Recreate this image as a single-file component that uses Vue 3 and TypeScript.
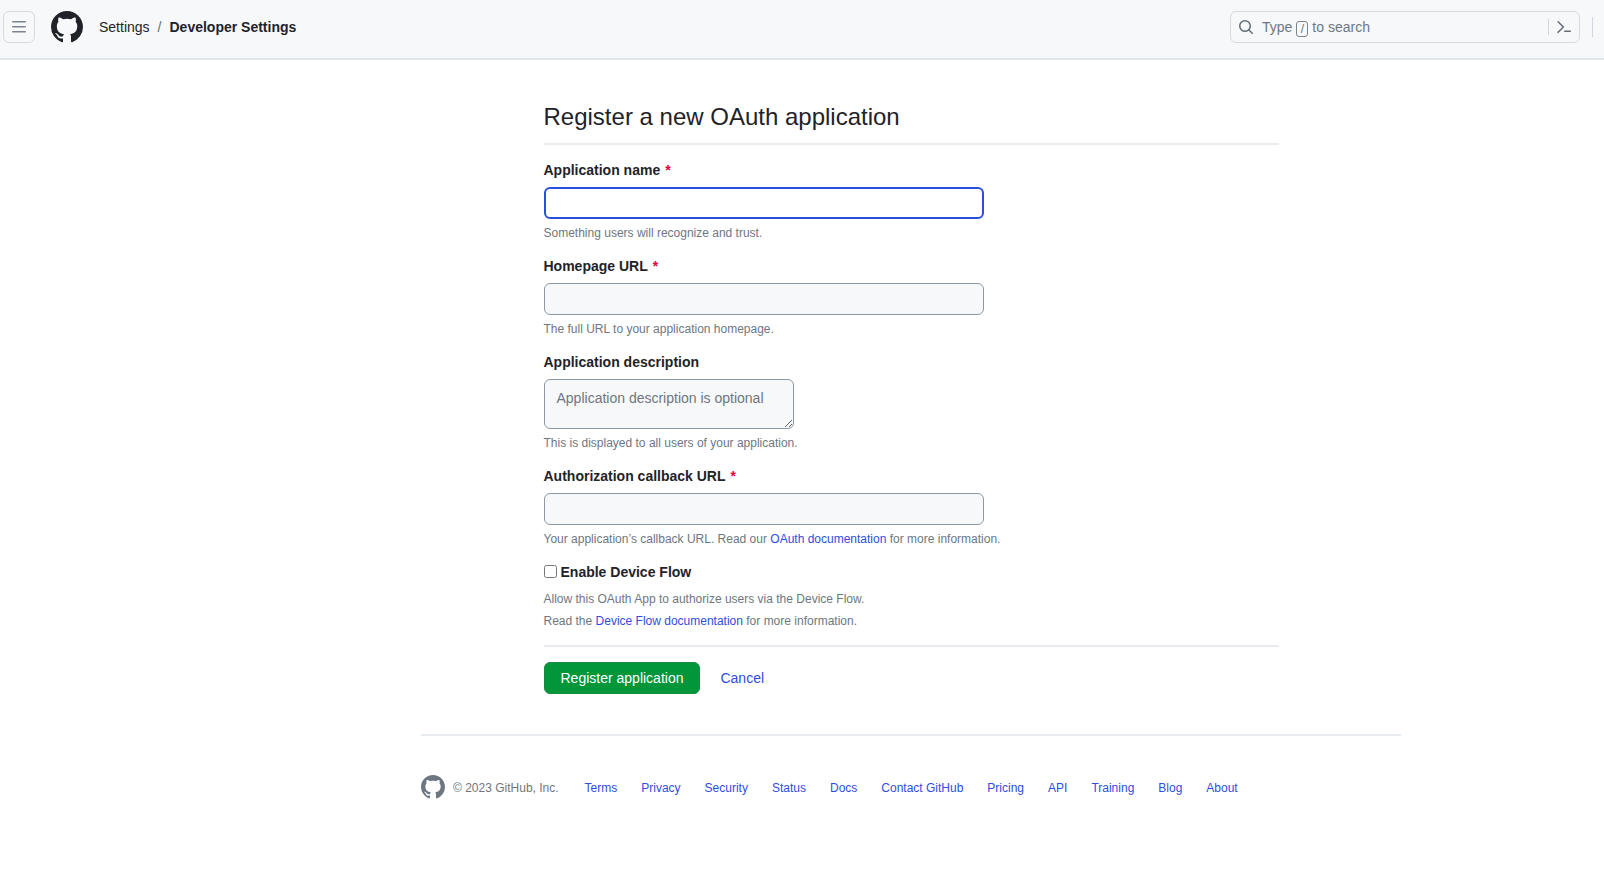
<script setup lang="ts">
import { ref } from 'vue'

interface TextField {
  id: string
  label: string
  required: boolean
  multiline: boolean
  placeholder: string
  before: string
  link: string
  after: string
}

const fields: TextField[] = [
  { id: 'name', label: 'Application name', required: true, multiline: false, placeholder: '', before: 'Something users will recognize and trust.', link: '', after: '' },
  { id: 'homepage', label: 'Homepage URL', required: true, multiline: false, placeholder: '', before: 'The full URL to your application homepage.', link: '', after: '' },
  { id: 'description', label: 'Application description', required: false, multiline: true, placeholder: 'Application description is optional', before: 'This is displayed to all users of your application.', link: '', after: '' },
  { id: 'callback', label: 'Authorization callback URL', required: true, multiline: false, placeholder: '', before: 'Your application’s callback URL. Read our ', link: 'OAuth documentation', after: ' for more information.' },
]

const values = ref<Record<string, string>>({ name: '', homepage: '', description: '', callback: '' })
const activeField = ref('name')
const deviceFlow = ref(false)

const footerLinks: string[] = ['Terms', 'Privacy', 'Security', 'Status', 'Docs', 'Contact GitHub', 'Pricing', 'API', 'Training', 'Blog', 'About']

const markPath = 'M8 0c4.42 0 8 3.58 8 8a8.013 8.013 0 0 1-5.45 7.59c-.4.08-.55-.17-.55-.38 0-.27.01-1.13.01-2.2 0-.75-.25-1.23-.54-1.48 1.78-.2 3.65-.88 3.65-3.95 0-.88-.31-1.59-.82-2.15.08-.2.36-1.02-.08-2.12 0 0-.67-.22-2.2.82-.64-.18-1.32-.27-2-.27-.68 0-1.36.09-2 .27-1.53-1.03-2.2-.82-2.2-.82-.44 1.1-.16 1.92-.08 2.12-.51.56-.82 1.28-.82 2.15 0 3.06 1.86 3.75 3.64 3.95-.23.2-.44.55-.51 1.07-.46.21-1.61.55-2.33-.66-.15-.24-.6-.83-1.23-.82-.67.01-.27.38.01.53.34.19.73.9.82 1.13.16.45.68 1.31 2.69.94 0 .67.01 1.3.01 1.49 0 .21-.15.45-.55.38A7.995 7.995 0 0 1 0 8c0-4.42 3.58-8 8-8Z'
</script>

<template>
  <div class="page">
    <header class="top">
      <button class="menu" type="button" aria-label="Open global navigation menu">
        <svg width="16" height="16" viewBox="0 0 16 16" aria-hidden="true"><path d="M1 2.75A.75.75 0 0 1 1.75 2h12.5a.75.75 0 0 1 0 1.5H1.75A.75.75 0 0 1 1 2.75Zm0 5A.75.75 0 0 1 1.75 7h12.5a.75.75 0 0 1 0 1.5H1.75A.75.75 0 0 1 1 7.75ZM1.75 12h12.5a.75.75 0 0 1 0 1.5H1.75a.75.75 0 0 1 0-1.5Z" /></svg>
      </button>
      <a class="logo" href="#" aria-label="Homepage">
        <svg width="32" height="32" viewBox="0 0 16 16" aria-hidden="true"><path :d="markPath" /></svg>
      </a>
      <nav class="crumbs" aria-label="Breadcrumb">
        <a href="#">Settings</a>
        <span class="slash">/</span>
        <a class="current" href="#">Developer Settings</a>
      </nav>
      <div class="search">
        <button class="search-open" type="button">
          <svg width="16" height="16" viewBox="0 0 16 16" aria-hidden="true"><path d="M10.68 11.74a6 6 0 0 1-7.922-8.982 6 6 0 0 1 8.982 7.922l3.04 3.04a.749.749 0 0 1-.326 1.275.749.749 0 0 1-.734-.215ZM11.5 7a4.499 4.499 0 1 0-8.997 0A4.499 4.499 0 0 0 11.5 7Z" /></svg>
          <span class="search-text">Type <kbd>/</kbd> to search</span>
        </button>
        <button class="palette" type="button" aria-label="Command palette">
          <svg width="16" height="16" viewBox="0 0 16 16" aria-hidden="true"><path d="m6.354 8.04-4.773 4.773a.75.75 0 1 0 1.061 1.06L7.945 8.57a.75.75 0 0 0 0-1.06L2.642 2.206a.75.75 0 0 0-1.06 1.061L6.353 8.04ZM8.75 11.5a.75.75 0 0 0 0 1.5h5.5a.75.75 0 0 0 0-1.5h-5.5Z" /></svg>
        </button>
      </div>
      <span class="divider"></span>
    </header>

    <div class="body">
      <main class="main">
        <h1>Register a new OAuth application</h1>
        <form @submit.prevent>
          <div class="groups">
            <div v-for="f in fields" :key="f.id">
              <label class="field-label" :for="f.id">{{ f.label }}<span v-if="f.required" class="required">*</span></label>
              <textarea v-if="f.multiline" :id="f.id" v-model="values[f.id]" class="control area" :placeholder="f.placeholder" @focus="activeField = f.id"></textarea>
              <input v-else :id="f.id" v-model="values[f.id]" type="text" class="control" :class="{ active: activeField === f.id }" @focus="activeField = f.id">
              <p class="note">{{ f.before }}<a v-if="f.link" href="#">{{ f.link }}</a>{{ f.after }}</p>
            </div>
            <div class="device">
              <div class="check">
                <input id="device-flow" v-model="deviceFlow" type="checkbox">
                <label for="device-flow">Enable Device Flow</label>
              </div>
              <p class="note device-note">Allow this OAuth App to authorize users via the Device Flow.<br>Read the <a href="#">Device Flow documentation</a> for more information.</p>
            </div>
          </div>
          <div class="actions">
            <button class="submit" type="submit">Register application</button>
            <a href="#">Cancel</a>
          </div>
        </form>
      </main>

      <footer class="footer">
        <svg width="24" height="24" viewBox="0 0 16 16" aria-hidden="true"><path :d="markPath" /></svg>
        <span class="copyright">© 2023 GitHub, Inc.</span>
        <ul>
          <li v-for="l in footerLinks" :key="l"><a href="#">{{ l }}</a></li>
        </ul>
      </footer>
    </div>
  </div>
</template>

<style>
body {
  margin: 0;
  background: #fff;
}
</style>

<style scoped>
.page {
  font-family: "Liberation Sans", Arial, Helvetica, sans-serif;
  font-size: 14px;
  line-height: 21px;
  color: #1f2328;
}
.page *,
.page {
  box-sizing: border-box;
}
a {
  color: #2f4de0;
  text-decoration: none;
}
svg {
  display: block;
  flex: none;
  fill: currentColor;
}
button,
input,
textarea {
  font-family: inherit;
  font-size: 14px;
  line-height: 20px;
}
p,
h1,
ul {
  margin: 0;
  padding: 0;
}

.top {
  display: flex;
  align-items: center;
  height: 60px;
  padding: 0 11px 4px 3px;
  background: #f6f8fa;
  border-bottom: 2px solid #e1e6eb;
}
.menu {
  display: flex;
  align-items: center;
  justify-content: center;
  width: 32px;
  height: 32px;
  padding: 0;
  color: #7c848d;
  background: transparent;
  border: 1px solid #d5dbe1;
  border-radius: 6px;
}
.logo {
  margin-left: 16px;
  color: #1f2328;
}
.crumbs {
  display: flex;
  gap: 8px;
  margin-left: 16px;
}
.crumbs a {
  color: #1f2328;
}
.slash {
  color: #656d76;
}
.crumbs .current {
  font-weight: 700;
}
.search {
  display: flex;
  align-items: center;
  width: 350px;
  height: 32px;
  margin-left: auto;
  color: #656d76;
  border: 1px solid #d5dbe1;
  border-radius: 6px;
}
.search-open {
  display: flex;
  flex: 1;
  align-items: center;
  gap: 8px;
  padding: 0 0 0 7px;
  color: inherit;
  background: transparent;
  border: 0;
}
.search-text {
  display: flex;
  align-items: flex-end;
  gap: 4px;
  color: #6e7781;
}
kbd {
  width: 12px;
  height: 16px;
  font-family: inherit;
  font-size: 12px;
  line-height: 14px;
  text-align: center;
  border: 1px solid #7c848d;
  border-radius: 3px;
}
.palette {
  display: flex;
  padding: 0 7px;
  color: inherit;
  background: transparent;
  border: 0;
  border-left: 1px solid #d0d7de;
}
.divider {
  width: 1px;
  height: 20px;
  margin-left: 12px;
  background: #d0d7de;
}

.body {
  max-width: 1198px;
  margin: 0 auto;
  padding-left: 218px;
}
.main {
  width: 75%;
  margin: 0 auto;
  padding: 39px 0 40px;
}
h1 {
  padding-bottom: 8px;
  font-size: 24px;
  font-weight: 400;
  line-height: 36px;
  border-bottom: 2px solid #e8ecf0;
}
.groups {
  display: flex;
  flex-direction: column;
  gap: 14px;
  padding: 15px 0 13px;
  border-bottom: 2px solid #e8ecf0;
}
.field-label {
  display: block;
  margin-bottom: 6px;
  font-weight: 700;
}
.required {
  margin-left: 5px;
  color: #e5003c;
}
.control {
  display: block;
  width: 100%;
  max-width: 440px;
  height: 32px;
  padding: 5px 12px;
  color: #1f2328;
  background: #f6f8fa;
  border: 1px solid #8f98a2;
  border-radius: 6px;
  outline: none;
}
.control.active {
  background: #fff;
  border: 2px solid #2850dc;
}
.area {
  max-width: 250px;
  height: 50px;
  padding: 8px 12px;
}
.area::placeholder {
  color: #6e7781;
}
.note {
  margin-top: 5px;
  font-size: 12px;
  line-height: 18px;
  color: #6e7781;
}
.device-note {
  line-height: 22px;
}
.check {
  display: flex;
  align-items: flex-start;
  gap: 4px;
}
.check input {
  width: 13px;
  height: 13px;
  margin: 3px 0 0;
}
.check label {
  font-weight: 700;
}
.actions {
  display: flex;
  align-items: center;
  gap: 20px;
  margin-top: 15px;
}
.submit {
  height: 32px;
  padding: 0 16px;
  color: #fff;
  background: #009639;
  border: 1px solid #178b41;
  border-radius: 6px;
}

.footer {
  display: flex;
  align-items: flex-end;
  padding: 39px 0;
  font-size: 12px;
  line-height: 22px;
  color: #6e7781;
  border-top: 2px solid #e8ecf0;
}
.copyright {
  margin-left: 8px;
}
.footer ul {
  display: flex;
  flex-wrap: wrap;
  gap: 0 24px;
  margin-left: 26px;
  list-style: none;
}
</style>
